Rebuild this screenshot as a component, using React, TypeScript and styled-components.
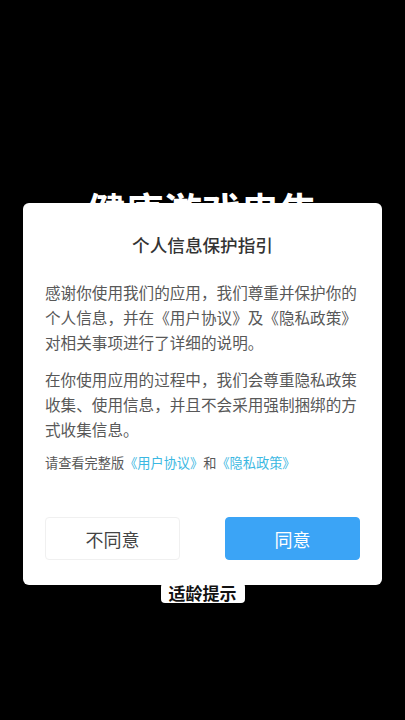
import React from "react";
import styled, { createGlobalStyle } from "styled-components";

const Global = createGlobalStyle`
  html, body {
    margin: 0;
    padding: 0;
    background: #000;
  }
  body {
    font-family: "Noto Sans CJK SC", "Noto Sans", sans-serif;
  }
  * { box-sizing: border-box; }
`;

const Splash = styled.div`
  width: 405px;
  height: 720px;
  background: #000;
  display: flex;
  flex-direction: column;
  align-items: center;
  padding-top: 190px;
  overflow: hidden;
`;

const Headline = styled.h1`
  margin: 0;
  font-size: 38px;
  line-height: 38px;
  font-weight: 700;
  color: #fff;
  letter-spacing: 0.5px;
`;

const AgeBadge = styled.div`
  margin-top: 355px;
  background: #fff;
  color: #111;
  font-size: 17px;
  font-weight: 700;
  line-height: 20px;
  padding: 0 8px;
  border-radius: 4px;
`;

const Overlay = styled.div`
  position: fixed;
  inset: 0;
  display: flex;
  justify-content: center;
  align-items: flex-start;
  padding-top: 203px;
`;

const Dialog = styled.div`
  width: 359px;
  background: #fff;
  border-radius: 6px;
  padding: 31px 22px 25px;
  display: flex;
  flex-direction: column;
`;

const Title = styled.h2`
  margin: 0;
  text-align: center;
  font-size: 17.6px;
  line-height: 22px;
  font-weight: 500;
  color: #333;
`;

const Body = styled.div`
  margin-top: 23.5px;
  display: flex;
  flex-direction: column;
`;

const Para = styled.p<{ $small?: boolean; $gap?: number }>`
  margin: ${(p) => p.$gap ?? 0}px 0 0;
  font-size: ${(p) => (p.$small ? "13.2px" : "15.6px")};
  line-height: ${(p) => (p.$small ? "20px" : "25px")};
  color: #585858;
`;

const Link = styled.span`
  color: #3bb8e2;
`;

const Actions = styled.div`
  margin-top: 44px;
  display: grid;
  grid-template-columns: 1fr 1fr;
  gap: 45px;
`;

const Button = styled.button<{ $primary?: boolean }>`
  height: 43px;
  border-radius: 4px;
  border: 1px solid ${(p) => (p.$primary ? "#3ba4f6" : "#f0f0f0")};
  background: ${(p) => (p.$primary ? "#3ba4f6" : "#fff")};
  color: ${(p) => (p.$primary ? "#fff" : "#444")};
  font-family: "Noto Sans CJK SC", "Noto Sans", sans-serif;
  font-size: 18px;
  padding: 0;
  cursor: pointer;
`;

export default function App() {
  return (
    <>
      <Global />
      <Splash>
        <Headline>健康游戏忠告</Headline>
        <AgeBadge>适龄提示</AgeBadge>
      </Splash>
      <Overlay>
        <Dialog>
          <Title>个人信息保护指引</Title>
          <Body>
            <Para>
              感谢你使用我们的应用，我们尊重并保护你的个人信息，并在《用户协议》及《隐私政策》对相关事项进行了详细的说明。
            </Para>
            <Para $gap={12}>
              在你使用应用的过程中，我们会尊重隐私政策收集、使用信息，并且不会采用强制捆绑的方式收集信息。
            </Para>
            <Para $small $gap={11.5}>
              请查看完整版<Link>《用户协议》</Link>和<Link>《隐私政策》</Link>
            </Para>
          </Body>
          <Actions>
            <Button>不同意</Button>
            <Button $primary>同意</Button>
          </Actions>
        </Dialog>
      </Overlay>
    </>
  );
}
